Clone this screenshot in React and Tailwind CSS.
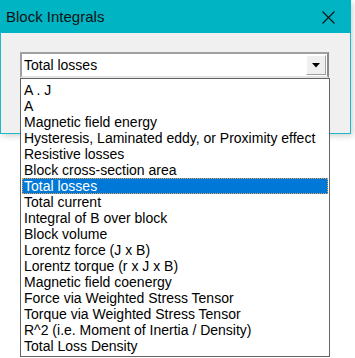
import React from 'react';

const items = [
  'A . J',
  'A',
  'Magnetic field energy',
  'Hysteresis, Laminated eddy, or Proximity effect',
  'Resistive losses',
  'Block cross-section area',
  'Total losses',
  'Total current',
  'Integral of B over block',
  'Block volume',
  'Lorentz force (J x B)',
  'Lorentz torque (r x J x B)',
  'Magnetic field coenergy',
  'Force via Weighted Stress Tensor',
  'Torque via Weighted Stress Tensor',
  'R^2 (i.e. Moment of Inertia / Density)',
  'Total Loss Density',
];

export default function App() {
  const selected = 6;

  return (
    <div
      className="relative w-[355px] h-[358px] overflow-hidden bg-white"
      style={{ fontFamily: '"Liberation Sans", Arial, sans-serif' }}
    >
      {/* Dialog window */}
      <div className="w-[351px] shadow-[2px_2px_6px_rgba(0,0,0,0.18)]">
        <div className="h-[33px] bg-[#00b4c4] flex items-center justify-between pl-[6px] pr-[16px]">
          <span className="text-[15px] text-[#111] mt-[1px]">Block Integrals</span>
          <svg width="13" height="13" viewBox="0 0 13 13" className="mt-[1px]">
            <path d="M0.5 0.5 L12.5 12.5 M12.5 0.5 L0.5 12.5" stroke="#111" strokeWidth="1.1" fill="none" />
          </svg>
        </div>
        <div className="h-[101px] bg-[#f0f0f0] border-x border-b border-[#1fb8c6] pt-[19px] pl-[19px]">
          {/* Combobox */}
          <div className="w-[309px] h-[26px] bg-white border-2 border-t-[#a0a0a0] border-l-[#a0a0a0] border-r-[#8a8a8a] border-b-[#e3e3e3] flex items-center justify-between">
            <span className="pl-[2px] text-[14px] text-black leading-none">Total losses</span>
            <div className="w-[20px] h-[20px] mr-[1px] bg-[#f0f0f0] border border-t-white border-l-white border-r-[#a0a0a0] border-b-[#a0a0a0] flex items-center justify-center">
              <svg width="8" height="5" viewBox="0 0 8 5">
                <path d="M0 0 H8 L4 4.5 Z" fill="#000" />
              </svg>
            </div>
          </div>
        </div>
      </div>

      {/* Dropdown list popup */}
      <div className="absolute left-[20px] top-[78px] w-[310px] h-[279px] bg-white border border-[#646464] pt-[3px] flex flex-col">
        {items.map((item, i) => (
          <div
            key={i}
            className={
              i === selected
                ? 'h-[16px] mx-[1px] pl-[2px] bg-[#0078d7] text-white text-[14px] leading-[16px] outline-1 outline-dotted outline-offset-[-1px] outline-[#e8a050] whitespace-nowrap'
                : 'h-[16px] mx-[1px] pl-[2px] text-black text-[14px] leading-[16px] whitespace-nowrap'
            }
          >
            {item}
          </div>
        ))}
      </div>
    </div>
  );
}
